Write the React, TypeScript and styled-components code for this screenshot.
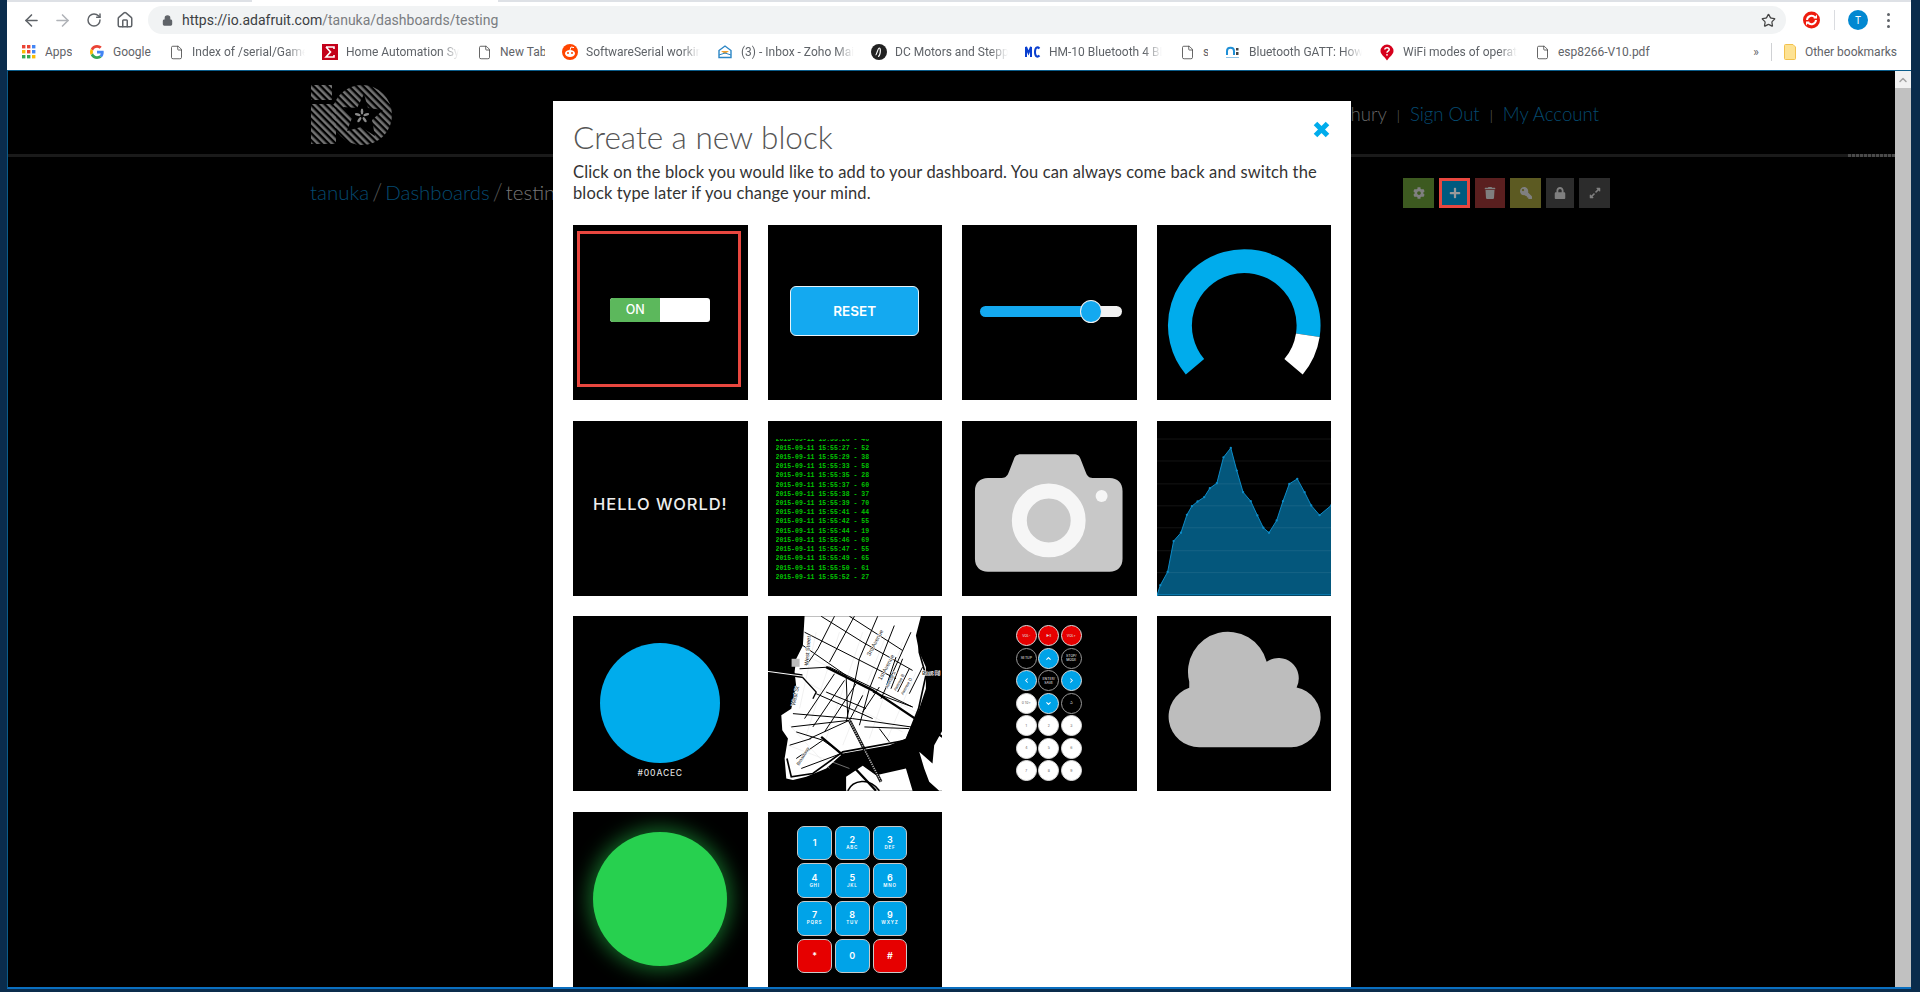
import React from "react";
import styled, { createGlobalStyle } from "styled-components";
import { ArrowLeft, ArrowRight, RotateCw, Home, Star, File, Lock, ChevronUp, ChevronDown, ChevronLeft, ChevronRight } from "lucide-react";
import { FaCog, FaPlus, FaTrash, FaKey, FaLock, FaExpandAlt } from "react-icons/fa";

const GlobalStyle = createGlobalStyle`
  html, body { margin: 0; padding: 0; background: #0a2c4c; overflow: hidden; }
  * { box-sizing: border-box; }
`;

const Window = styled.div`
  width: 1920px;
  height: 992px;
  padding: 0 9px 3px 7px;
  display: flex;
  flex-direction: column;
  background: #0a2c4c;
  overflow: hidden;
  font-family: "Lato", "Liberation Sans", sans-serif;
`;

const TabStrip = styled.div`
  height: 2px;
  background: #dee1e6;
  padding-left: 245px;
  flex: none;
`;

const ActiveTab = styled.div`
  width: 246px;
  height: 2px;
  background: #fff;
`;

const Toolbar = styled.div`
  height: 32px;
  flex: none;
  background: #fff;
  display: flex;
  align-items: flex-start;
  padding: 4px 0 0 5px;
  color: #5f6368;
`;

const NavButton = styled.span<{ $w: number; $dim?: boolean }>`
  width: ${(p) => p.$w}px;
  height: 28px;
  display: flex;
  align-items: center;
  justify-content: center;
  color: ${(p) => (p.$dim ? "#b0b3b8" : "#5f6368")};
`;

const AddressBar = styled.div`
  width: 1638px;
  height: 28px;
  margin-left: 12px;
  border-radius: 14px;
  background: #f1f3f4;
  display: flex;
  align-items: center;
  padding: 0 10px 0 14px;
  color: #5f6368;
`;

const Url = styled.span`
  margin-left: 9px;
  flex: 1;
  font-family: "Roboto", sans-serif;
  font-size: 14px;
  color: #7a7d81;
  b {
    font-weight: 400;
    color: #3c4043;
  }
`;

const ToolIcons = styled.div`
  display: flex;
  align-items: center;
  height: 28px;
  margin-left: 17px;
`;

const Divider = styled.span`
  width: 1px;
  height: 20px;
  margin: 0 13px 0 14px;
  background: #dadce0;
`;

const Avatar = styled.span`
  width: 20px;
  height: 20px;
  border-radius: 50%;
  background: #0288d1;
  color: #fff;
  font: 400 10px "Noto Sans", sans-serif;
  display: flex;
  align-items: center;
  justify-content: center;
`;

const Kebab = styled.span`
  margin-left: 19px;
  width: 3px;
  display: flex;
  flex-direction: column;
  gap: 3px;
  i {
    width: 3px;
    height: 3px;
    border-radius: 50%;
    background: #5f6368;
  }
`;

const BookmarksBar = styled.div`
  height: 36px;
  flex: none;
  background: #fff;
  display: flex;
  align-items: center;
  padding-left: 14px;
  gap: 17px;
`;

const Bookmark = styled.div`
  display: flex;
  align-items: center;
  gap: 8px;
  flex: none;
`;

const BookmarkIcon = styled.span`
  width: 16px;
  height: 16px;
  display: flex;
  align-items: center;
  justify-content: center;
  color: #5f6368;
`;

const BookmarkLabel = styled.span<{ $w: number; $fade?: boolean }>`
  width: ${(p) => p.$w}px;
  overflow: hidden;
  white-space: nowrap;
  font-family: "Roboto", sans-serif;
  font-size: 12px;
  color: #5f6368;
  ${(p) =>
    p.$fade
      ? "-webkit-mask-image: linear-gradient(90deg, #000 84%, transparent 100%); mask-image: linear-gradient(90deg, #000 84%, transparent 100%);"
      : ""}
`;

const BarEnd = styled.div`
  margin-left: auto;
  display: flex;
  align-items: center;
  padding-right: 14px;
  gap: 9px;
  font-family: "Roboto", sans-serif;
  font-size: 12px;
  color: #5f6368;
`;

const BarRule = styled.span`
  width: 1px;
  height: 18px;
  margin: 0 3px;
  background: #cfd1d4;
`;

const PageArea = styled.div`
  position: relative;
  flex: 1;
  min-height: 0;
  display: flex;
  border-top: 1px solid #0b5c8a;
  border-bottom: 2px solid #0a6fc0;
  border-left: 1px solid #0b5c8a;
`;

const Page = styled.main`
  flex: 1;
  min-width: 0;
  background: #000;
`;

const Scrollbar = styled.div`
  width: 16px;
  background: #f1f1f1;
  display: flex;
  flex-direction: column;
  color: #a3a3a3;
`;

const ScrollArrow = styled.div`
  height: 17px;
  display: flex;
  align-items: center;
  justify-content: center;
`;

const ScrollThumb = styled.div`
  flex: 1;
  background: #c1c1c1;
`;

const Header = styled.header`
  height: 86px;
  display: flex;
  justify-content: space-between;
  padding: 13px 296px 0 302px;
  border-bottom: 3px solid #1a1a1a;
  position: relative;
`;

const HeaderDots = styled.span`
  position: absolute;
  right: 0;
  bottom: -3px;
  width: 47px;
  height: 3px;
  background: repeating-linear-gradient(90deg, #4a4a4a 0 3px, #1a1a1a 3px 4px);
`;

const UserNav = styled.nav`
  display: flex;
  align-items: baseline;
  gap: 10px;
  padding-top: 19px;
  font-size: 18.6px;
  font-weight: 300;
  color: #054a70;
`;

const UserName = styled.span`
  color: #666;
`;

const NavBar = styled.span`
  font-size: 13px;
  color: #777;
`;

const SubHeader = styled.div`
  display: flex;
  justify-content: space-between;
  padding: 21px 285px 0 302px;
`;

const Crumbs = styled.div`
  display: flex;
  gap: 3px;
  align-items: baseline;
  height: 26px;
  font-size: 20.5px;
  line-height: 26px;
  font-weight: 300;
  color: #054a70;
`;

const CrumbSlash = styled.span`
  font-size: 23px;
  color: #555;
`;

const CrumbCurrent = styled.span`
  color: #777;
`;

const Actions = styled.div`
  display: flex;
  gap: 5px;
`;

const ActionButton = styled.span<{ $w: number; $bg: string; $active?: boolean }>`
  width: ${(p) => p.$w}px;
  height: 30px;
  display: flex;
  align-items: center;
  justify-content: center;
  background: ${(p) => p.$bg};
  color: ${(p) => (p.$active ? "#9a9a9a" : "#7f7f7f")};
  font-size: 12px;
  border: ${(p) => (p.$active ? "3px solid #e8473f" : "none")};
`;

const FlippedKey = styled(FaKey)`
  transform: scaleX(-1);
`;

const Modal = styled.section`
  position: absolute;
  left: 545px;
  top: 30px;
  bottom: 0;
  width: 798px;
  background: #fff;
  padding: 17px 20px 0;
  overflow: hidden;
`;

const ModalTitle = styled.h2`
  margin: 0;
  font-size: 31.5px;
  line-height: 38px;
  font-weight: 300;
  color: #555;
`;

const CloseIcon = styled.svg`
  position: absolute;
  top: 20px;
  right: 21px;
`;

const ModalText = styled.p`
  margin: 6px 0 0;
  font-size: 16.5px;
  letter-spacing: 0.13px;
  line-height: 21px;
  color: #333;
`;

const BlockGrid = styled.div`
  margin-top: 21px;
  display: grid;
  grid-template-columns: repeat(4, 1fr);
  grid-auto-rows: 175px;
  column-gap: 20px;
  row-gap: 20.67px;
`;

const Tile = styled.div`
  position: relative;
  background: #000;
  display: flex;
  align-items: center;
  justify-content: center;
  overflow: hidden;
  svg {
    display: block;
  }
`;

const SelectedOutline = styled.span`
  position: absolute;
  left: 4px;
  top: 6px;
  right: 7px;
  bottom: 13px;
  border: 3px solid #e8473f;
`;

const SwitchTrack = styled.div`
  width: 100px;
  height: 24px;
  margin: 0 0 6px 0;
  display: flex;
  border-radius: 3px;
  overflow: hidden;
  background: #fff;
`;

const SwitchOn = styled.span`
  width: 50px;
  background: #5cb85c;
  color: #fff;
  font: 500 12.5px "Inter", sans-serif;
  display: flex;
  align-items: center;
  justify-content: center;
`;

const ResetButton = styled.span`
  width: 129px;
  height: 50px;
  margin-bottom: 3px;
  border: 1px solid #e8f3f8;
  border-radius: 6px;
  background: #14a9f0;
  color: #fff;
  font: 600 13.5px "Inter", sans-serif;
  display: flex;
  align-items: center;
  justify-content: center;
`;

const SliderTrack = styled.div`
  position: relative;
  width: 142px;
  height: 11px;
  margin: 0 0 2px 3px;
  border-radius: 6px;
  background: linear-gradient(90deg, #14a9f0 0 78%, #f2f2f2 78%);
`;

const SliderKnob = styled.span`
  position: absolute;
  left: 100px;
  top: -6px;
  width: 22px;
  height: 23px;
  border-radius: 50%;
  background: #14a9f0;
  border: 1px solid #f0f0f0;
`;

const HelloText = styled.span`
  margin-bottom: 8px;
  color: #eee;
  font: 500 16.5px "Inter", sans-serif;
  letter-spacing: 0.9px;
`;

const LogTile = styled(Tile)`
  align-items: flex-start;
  justify-content: flex-start;
`;

const LogWindow = styled.div`
  margin: 18px 0 0 8px;
  height: 142px;
  overflow: hidden;
  font: 700 6.5px/9.2px "Liberation Mono", monospace;
  color: #00c400;
  white-space: pre;
`;

const LogLine = styled.div`
  &:first-child {
    margin-top: -4px;
  }
`;

const ColorTile = styled(Tile)`
  flex-direction: column;
  justify-content: flex-start;
  padding-top: 27px;
`;

const ColorDisc = styled.span`
  width: 120px;
  height: 120px;
  border-radius: 50%;
  background: #00acec;
`;

const ColorCode = styled.span`
  margin-top: 5px;
  color: #ddd;
  font: 500 8.5px "Inter", sans-serif;
  letter-spacing: 0.8px;
`;

const RemoteGrid = styled.div`
  display: grid;
  grid-template-columns: repeat(3, 21px);
  grid-auto-rows: 21px;
  gap: 1.5px;
  margin: 0 0 1px -1px;
`;

const RemoteKey = styled.span<{ $kind: "red" | "blue" | "dark" | "white" }>`
  border-radius: 50%;
  border: 0.5px solid ${(p) => (p.$kind === "dark" ? "#999" : "#ddd")};
  background: ${(p) =>
    p.$kind === "red" ? "#e60000" : p.$kind === "blue" ? "#00a3e8" : p.$kind === "white" ? "#fff" : "#000"};
  color: ${(p) => (p.$kind === "white" ? "#777" : "#ddd")};
  font: 500 3.4px/4px "Inter", sans-serif;
  display: flex;
  align-items: center;
  justify-content: center;
  text-align: center;
`;

const GlowDisc = styled.span`
  width: 134px;
  height: 134px;
  border-radius: 50%;
  background: #27d04f;
  box-shadow: 0 0 20px 4px rgba(39, 208, 79, 0.5);
`;

const KeypadGrid = styled.div`
  display: grid;
  grid-template-columns: repeat(3, 34.6px);
  grid-auto-rows: 34.6px;
  gap: 3.1px;
  margin: 0 5px 0 0;
`;

const PadKey = styled.span<{ $red?: boolean }>`
  border: 1px solid #c9c9c9;
  border-radius: 7px;
  background: ${(p) => (p.$red ? "#e60000" : "#00a3e8")};
  color: #fff;
  font: 600 9px/10px "Inter", sans-serif;
  display: flex;
  flex-direction: column;
  align-items: center;
  justify-content: center;
  small {
    font-size: 4.5px;
    line-height: 6px;
    letter-spacing: 0.8px;
  }
`;

const logLines = [
  "2015-09-11 15:55:26 - 46",
  "2015-09-11 15:55:27 - 52",
  "2015-09-11 15:55:29 - 38",
  "2015-09-11 15:55:33 - 58",
  "2015-09-11 15:55:35 - 28",
  "2015-09-11 15:55:37 - 60",
  "2015-09-11 15:55:38 - 37",
  "2015-09-11 15:55:39 - 70",
  "2015-09-11 15:55:41 - 44",
  "2015-09-11 15:55:42 - 55",
  "2015-09-11 15:55:44 - 19",
  "2015-09-11 15:55:46 - 69",
  "2015-09-11 15:55:47 - 55",
  "2015-09-11 15:55:49 - 65",
  "2015-09-11 15:55:50 - 61",
  "2015-09-11 15:55:52 - 27",
];

const chevron = { size: 7, strokeWidth: 3.5, color: "#fff" };

const remoteKeys: { label: React.ReactNode; kind: "red" | "blue" | "dark" | "white" }[] = [
  { label: "VOL-", kind: "red" },
  { label: "▶II", kind: "red" },
  { label: "VOL+", kind: "red" },
  { label: "SETUP", kind: "dark" },
  { label: <ChevronUp {...chevron} />, kind: "blue" },
  { label: "STOP/ MODE", kind: "dark" },
  { label: <ChevronLeft {...chevron} />, kind: "blue" },
  { label: "ENTER/ SAVE", kind: "dark" },
  { label: <ChevronRight {...chevron} />, kind: "blue" },
  { label: "0 10+", kind: "white" },
  { label: <ChevronDown {...chevron} />, kind: "blue" },
  { label: "↺", kind: "dark" },
  ...["1", "2", "3", "4", "5", "6", "7", "8", "9"].map((n) => ({ label: n, kind: "white" as const })),
];

const padKeys: { n: string; sub?: string; red?: boolean }[] = [
  { n: "1" },
  { n: "2", sub: "ABC" },
  { n: "3", sub: "DEF" },
  { n: "4", sub: "GHI" },
  { n: "5", sub: "JKL" },
  { n: "6", sub: "MNO" },
  { n: "7", sub: "PQRS" },
  { n: "8", sub: "TUV" },
  { n: "9", sub: "WXYZ" },
  { n: "*", red: true },
  { n: "0" },
  { n: "#", red: true },
];

const chartPoints: [number, number][] = [
  [618, 555], [628, 525], [650, 485], [668, 392], [690, 367], [708, 313], [723, 287], [740, 273], [760, 260],
  [777, 233], [798, 218], [818, 140], [840, 112], [858, 180], [877, 245], [900, 272], [920, 315], [938, 352],
  [955, 367], [978, 330], [997, 272], [1016, 220], [1040, 205], [1062, 245], [1082, 285], [1107, 314], [1143, 284],
];

const polar = (cx: number, cy: number, r: number, deg: number) => {
  const a = (deg * Math.PI) / 180;
  return `${(cx + r * Math.cos(a)).toFixed(2)} ${(cy + r * Math.sin(a)).toFixed(2)}`;
};

// angles run clockwise from 3 o'clock, so the gap sits at the bottom
const arcPath = (from: number, to: number, large: number) =>
  `M${polar(87.5, 100.5, 64.5, from)} A64.5 64.5 0 ${large} 1 ${polar(87.5, 100.5, 64.5, to)}`;

const Gauge = () => (
  <svg width="175" height="175" viewBox="0 0 175 175">
    <path d={arcPath(140, 368.7, 1)} fill="none" stroke="#00acec" strokeWidth="24" />
    <path d={arcPath(8.7, 40, 0)} fill="none" stroke="#fff" strokeWidth="24" />
  </svg>
);

const Camera = () => (
  <svg width="175" height="175" viewBox="0 0 175 175">
    <path
      d="M22 57H40C44 57 46 54 47 51L52 38C53 35 55 33 59 33H112C116 33 118 35 119 38L124 51C125 54 127 57 131 57H148C156 57 161 62 161 70V138C161 146 156 151 148 151H26C18 151 13 146 13 138V70C13 62 18 57 26 57Z"
      fill="#c8c8c8"
    />
    <circle cx="87" cy="99.5" r="29.5" fill="none" stroke="#f6f6f6" strokeWidth="15" />
    <circle cx="140" cy="75" r="6" fill="#f6f6f6" />
  </svg>
);

const AreaChart = () => {
  const line = chartPoints.map(([x, y]) => `${x},${y}`).join(" ");
  return (
    <svg width="175" height="175" viewBox="618 33 525 522">
      <polygon points={`${line} 1143,555`} fill="#04577c" />
      {[85, 151, 220, 286, 352, 421, 487].map((y) => (
        <line key={y} x1="618" x2="1143" y1={y} y2={y} stroke="#fff" strokeOpacity="0.12" strokeWidth="2" />
      ))}
      <polyline points={line} fill="none" stroke="#0d8cc8" strokeWidth="3" />
      <line x1="618" x2="1143" y1="554" y2="554" stroke="#0d8cc8" strokeWidth="3" />
      {chartPoints.map(([x, y]) => (
        <circle key={x} cx={x} cy={y} r="3.5" fill="#0d8cc8" />
      ))}
    </svg>
  );
};

const mapRoads = [
  "M175 12L300 90L450 175",
  "M260 12L420 115",
  "M125 60L400 200",
  "M110 170L200 165L450 285",
  "M90 305L270 320L445 345",
  "M85 345L260 325",
  "M120 100L250 190L255 320",
  "M215 12L165 110L130 160",
  "M275 12L200 150",
  "M345 12L290 140L270 240L250 330",
  "M395 40L320 230L290 340",
  "M445 60L355 260",
  "M140 380L260 325L300 250",
  "M160 245L330 320",
  "M190 240L310 290",
  "M100 360L180 385L230 420",
  "M350 350L380 390",
  "M80 400L145 380",
  "M420 140L385 230",
  "M400 135L370 225",
  "M440 170L405 240",
  "M480 165L440 245",
  "M125 320L215 185",
  "M150 345L245 205",
  "M185 360L280 215",
  "M300 300L350 225",
  "M100 440L180 385",
  "M115 470L235 425",
  "M305 345L440 350",
  "M330 240L450 285",
];

const mapLanes = [
  "M130 130L460 300",
  "M130 210L420 360",
  "M75 400L260 470",
  "M80 340L200 470",
  "M160 60L110 290",
  "M230 60L130 370",
  "M300 60L190 380",
  "M370 70L240 400",
  "M420 90L320 380",
  "M460 180L370 390",
];

const CityMap = () => (
  <svg width="175" height="175" viewBox="15 12 525 525">
    <rect x="15" y="12" width="525" height="525" fill="#000" />
    <path
      d="M125 12H475L460 70L470 120L490 165L490 230L470 290L445 345L430 380L380 400L240 425L190 470L130 495L90 505L70 500L65 440L75 380L58 355L55 310L85 290L100 225L95 180L100 140L120 100Z"
      fill="#fff"
    />
    <path d="M540 355L515 400L510 455L470 420L485 470L500 510L530 537H540Z" fill="#fff" />
    <path d="M250 495L300 462L340 490L430 470L450 537H250Z" fill="#fff" />
    <g fill="none" stroke="#e2e2e2" strokeWidth="1.5">
      {mapLanes.map((d) => (
        <path key={d} d={d} />
      ))}
    </g>
    <g fill="none" stroke="#000" strokeWidth="3">
      {mapRoads.map((d) => (
        <path key={d} d={d} />
      ))}
    </g>
    <g fill="none" stroke="#000">
      <path d="M15 178L118 192" strokeWidth="11" />
      <path d="M15 178L118 192" strokeWidth="3" stroke="#fff" />
      <path d="M190 165L330 235L540 375" strokeWidth="7" />
      <path d="M175 375L235 425L340 537" strokeWidth="7" />
      <path d="M260 325L355 510" strokeWidth="9" />
      <path d="M260 325L355 510" strokeWidth="5" stroke="#aaa" strokeDasharray="4 3" />
      <path d="M118 195L160 240L150 260" strokeWidth="4" />
      <path d="M72 440L85 495L150 485L240 420L430 385L468 290L490 190L470 120L470 50" strokeWidth="5" />
      <path d="M60 500L75 537" strokeWidth="5" />
      <path d="M255 537C270 505 320 495 350 537" strokeWidth="5" />
    </g>
    <g fontFamily="Liberation Sans, sans-serif" fontSize="17" fill="#222" stroke="#fff" strokeWidth="3" paintOrder="stroke">
      <text transform="translate(136 160) rotate(-85)">West Street</text>
      <text transform="translate(96 282) rotate(-78)">West St</text>
      <text transform="translate(322 132) rotate(-62)">3rd Avenue</text>
      <text transform="translate(356 205) rotate(-62)">1st Avenue</text>
      <text transform="translate(375 230) rotate(-62)" fontSize="13">Avenue A</text>
      <text transform="translate(400 238) rotate(-62)" fontSize="13">Avenue B</text>
      <text transform="translate(422 250) rotate(-62)" fontSize="13">Avenue D</text>
      <text transform="translate(108 462) rotate(-58)" fontSize="14">Broadway</text>
      <text x="478" y="188">East Ri</text>
    </g>
    <rect x="86" y="140" width="24" height="24" fill="#bbb" />
  </svg>
);

const Cloud = () => (
  <svg width="175" height="175" viewBox="618 18 525 525">
    <path
      d="M745 412H1022A91 91 0 0 0 1038 232A61 61 0 0 0 948 155A120 120 0 0 0 715 215V233A92 92 0 0 0 745 412Z"
      fill="#bdbdbd"
    />
  </svg>
);

const LogoMark = () => (
  <svg width="82" height="62" viewBox="8 4 82 62">
    <defs>
      <pattern id="hatch" width="5" height="5" patternUnits="userSpaceOnUse" patternTransform="rotate(-45)">
        <rect width="2.6" height="5" fill="#737373" />
      </pattern>
    </defs>
    <rect x="9" y="5" width="21" height="15" fill="url(#hatch)" />
    <path d="M9 24H34V64H9Z" fill="url(#hatch)" />
    <circle cx="60" cy="35" r="30" fill="url(#hatch)" />
    <path d="M62 14L66 28L81 30L70 40L73 56L59 47L45 51L50 38L41 27L55 28Z" fill="#000" />
    <g fill="#8a8a8a">
      {[0, 72, 144, 216, 288].map((a) => (
        <ellipse key={a} cx="60" cy="31.500" rx="1.300" ry="3" transform={`rotate(${a} 60 36)`} />
      ))}
    </g>
  </svg>
);

const GoogleIcon = () => (
  <svg width="14" height="14" viewBox="0 0 48 48">
    <path fill="#ea4335" d="M24 9.5c3.5 0 6.7 1.2 9.2 3.6l6.9-6.9C35.9 2.4 30.5 0 24 0 14.6 0 6.5 5.4 2.6 13.3l8 6.2C12.4 13.6 17.700 9.5 24 9.5z" />
    <path fill="#4285f4" d="M47 24.500c0-1.600-.1-3.100-.4-4.500H24v9h12.900c-.6 3-2.200 5.500-4.700 7.200l7.700 6c4.500-4.200 7.100-10.300 7.100-17.700z" />
    <path fill="#fbbc05" d="M10.600 28.500c-.5-1.400-.8-2.900-.8-4.500s.3-3.100.8-4.500l-8-6.200C.9 16.500 0 20.100 0 24s.9 7.500 2.600 10.700l8-6.200z" />
    <path fill="#34a853" d="M24 48c6.500 0 11.900-2.100 15.900-5.800l-7.700-6c-2.200 1.400-4.900 2.300-8.200 2.300-6.300 0-11.600-4.100-13.400-9.900l-8 6.200C6.500 42.600 14.600 48 24 48z" />
  </svg>
);

const AppsIcon = () => (
  <svg width="14" height="14" viewBox="0 0 14 14">
    {[0, 5, 10].flatMap((y, r) =>
      [0, 5, 10].map((x, c) => (
        <rect
          key={`${x}-${y}`}
          x={x}
          y={y}
          width="3.4"
          height="3.4"
          fill={[["#ea4335", "#ea4335", "#4285f4"], ["#fbbc05", "#ea4335", "#4285f4"], ["#34a853", "#34a853", "#fbbc05"]][r][c]}
        />
      ))
    )}
  </svg>
);

const SigmaIcon = () => (
  <svg width="16" height="16" viewBox="0 0 16 16">
    <rect width="16" height="16" fill="#c4001a" />
    <path d="M4 3H12V5M4 3L8.500 8L4 13H12V11" fill="none" stroke="#fff" strokeWidth="1.600" />
  </svg>
);

const RedditIcon = () => (
  <svg width="16" height="16" viewBox="0 0 16 16">
    <circle cx="8" cy="8" r="8" fill="#ff4500" />
    <ellipse cx="8" cy="9.500" rx="5" ry="3.400" fill="#fff" />
    <circle cx="6" cy="9" r="1" fill="#ff4500" />
    <circle cx="10" cy="9" r="1" fill="#ff4500" />
    <path d="M8 6L9 3L12 3.600" stroke="#fff" fill="none" />
  </svg>
);

const ZohoIcon = () => (
  <svg width="16" height="16" viewBox="0 0 16 16">
    <path d="M2 6.500L8 2L14 6.500V13.500H2Z" fill="#fff" stroke="#2c86c5" strokeWidth="1.400" />
    <path d="M4 7H12L8 10Z" fill="#f0a030" />
    <path d="M2 11L8 9L14 11" fill="none" stroke="#2c86c5" />
  </svg>
);

const ScopeIcon = () => (
  <svg width="16" height="16" viewBox="0 0 16 16">
    <circle cx="8" cy="8" r="8" fill="#222" />
    <path d="M4.500 11C6 11 6.500 4 8.500 4C10 4 9.500 12 7 12.500" fill="none" stroke="#fff" strokeWidth="1.200" />
  </svg>
);

const McIcon = () => (
  <svg width="16" height="16" viewBox="0 0 16 16">
    <path d="M1 13V3L3.500 9L6 3V13M14.500 4.500C12.500 2.500 10 3 10 8S12.500 13.500 14.500 11.500" fill="none" stroke="#0a3fcf" strokeWidth="2" />
  </svg>
);

const SilverBitsIcon = () => (
  <svg width="16" height="16" viewBox="0 0 16 16">
    <path d="M2 11V7C2 2.500 9 2.500 9 7V11" fill="none" stroke="#1f8fd6" strokeWidth="2" />
    <rect x="11" y="4" width="2.500" height="2.500" fill="#444" />
    <rect x="11" y="8" width="2.500" height="3" fill="#444" />
    <rect x="1" y="13" width="13" height="1" fill="#8fc4e8" />
  </svg>
);

const WifiIcon = () => (
  <svg width="14" height="17" viewBox="0 0 14 17">
    <path d="M7 0.500A6.500 6.500 0 0 1 13.500 7C13.500 10.500 10 12 7 16.500C4 12 0.500 10.500 0.500 7A6.500 6.500 0 0 1 7 0.500Z" fill="#d6001c" />
    <path d="M4.800 5.500C5 3 9.200 3 9.200 5.500C9.200 7.300 7 7 7 8.800" fill="none" stroke="#fff" strokeWidth="1.500" />
    <circle cx="7" cy="10.800" r="0.900" fill="#fff" />
  </svg>
);

const SyncBadge = () => (
  <svg width="17" height="18" viewBox="0 0 17 18">
    <circle cx="8.500" cy="9" r="8.500" fill="#ee1c0e" />
    <path d="M4 9A4.500 4.500 0 0 1 12 6.500M13 9A4.500 4.500 0 0 1 5 11.500" fill="none" stroke="#fff" strokeWidth="2" />
    <path d="M10.500 7.500H14V3.500ZM6.500 10.500H3V14.500Z" fill="#fff" />
  </svg>
);

const FolderIcon = () => (
  <svg width="12" height="16" viewBox="0 0 12 16">
    <path d="M0.500 1.500A1 1 0 0 1 1.500 0.500H9L11.500 3V14.500A1 1 0 0 1 10.500 15.500H1.500A1 1 0 0 1 0.500 14.500Z" fill="#fde293" stroke="#f2c14e" />
  </svg>
);

const DocIcon = () => <File size={15} strokeWidth={1.3} color="#444" />;

const bookmarks: { icon: React.ReactNode; label: string; w: number; fade?: boolean }[] = [
  { icon: <AppsIcon />, label: "Apps", w: 27 },
  { icon: <GoogleIcon />, label: "Google", w: 38 },
  { icon: <DocIcon />, label: "Index of /serial/Game", w: 113, fade: true },
  { icon: <SigmaIcon />, label: "Home Automation Sys", w: 113, fade: true },
  { icon: <DocIcon />, label: "New Tab", w: 45 },
  { icon: <RedditIcon />, label: "SoftwareSerial working", w: 114, fade: true },
  { icon: <ZohoIcon />, label: "(3) - Inbox - Zoho Mail", w: 113, fade: true },
  { icon: <ScopeIcon />, label: "DC Motors and Steppers", w: 113, fade: true },
  { icon: <McIcon />, label: "HM-10 Bluetooth 4 BLE", w: 113, fade: true },
  { icon: <DocIcon />, label: "s", w: 5 },
  { icon: <SilverBitsIcon />, label: "Bluetooth GATT: How", w: 113, fade: true },
  { icon: <WifiIcon />, label: "WiFi modes of operation", w: 114, fade: true },
  { icon: <DocIcon />, label: "esp8266-V10.pdf", w: 92 },
];

export default function App() {
  return (
    <Window>
      <GlobalStyle />
      <TabStrip>
        <ActiveTab />
      </TabStrip>
      <Toolbar>
        <NavButton $w={38}>
          <ArrowLeft size={19} />
        </NavButton>
        <NavButton $w={24} $dim>
          <ArrowRight size={19} />
        </NavButton>
        <NavButton $w={40}>
          <RotateCw size={16} strokeWidth={2.2} />
        </NavButton>
        <NavButton $w={22}>
          <Home size={18} />
        </NavButton>
        <AddressBar>
          <Lock size={11} fill="#5f6368" strokeWidth={2.5} />
          <Url>
            <b>https://io.adafruit.com</b>/tanuka/dashboards/testing
          </Url>
          <Star size={15} color="#444" strokeWidth={2} />
        </AddressBar>
        <ToolIcons>
          <SyncBadge />
          <Divider />
          <Avatar>T</Avatar>
          <Kebab>
            <i />
            <i />
            <i />
          </Kebab>
        </ToolIcons>
      </Toolbar>
      <BookmarksBar>
        {bookmarks.map((b) => (
          <Bookmark key={b.label}>
            <BookmarkIcon>{b.icon}</BookmarkIcon>
            <BookmarkLabel $w={b.w} $fade={b.fade}>
              {b.label}
            </BookmarkLabel>
          </Bookmark>
        ))}
        <BarEnd>
          <span>»</span>
          <BarRule />
          <FolderIcon />
          <span>Other bookmarks</span>
        </BarEnd>
      </BookmarksBar>
      <PageArea>
        <Page>
          <Header>
            <LogoMark />
            <UserNav>
              <UserName>Tanuka Chowdhury</UserName>
              <NavBar>|</NavBar>
              <span>Sign Out</span>
              <NavBar>|</NavBar>
              <span>My Account</span>
            </UserNav>
            <HeaderDots />
          </Header>
          <SubHeader>
            <Crumbs>
              <span>tanuka</span>
              <CrumbSlash>/</CrumbSlash>
              <span>Dashboards</span>
              <CrumbSlash>/</CrumbSlash>
              <CrumbCurrent>testing</CrumbCurrent>
            </Crumbs>
            <Actions>
              <ActionButton $w={31} $bg="#3d5a20">
                <FaCog />
              </ActionButton>
              <ActionButton $w={31} $bg="#005a7f" $active>
                <FaPlus />
              </ActionButton>
              <ActionButton $w={30} $bg="#5a1f1f">
                <FaTrash />
              </ActionButton>
              <ActionButton $w={31} $bg="#5c5a22">
                <FlippedKey />
              </ActionButton>
              <ActionButton $w={28} $bg="#2c2c2c">
                <FaLock />
              </ActionButton>
              <ActionButton $w={31} $bg="#2c2c2c">
                <FaExpandAlt />
              </ActionButton>
            </Actions>
          </SubHeader>
        </Page>
        <Scrollbar>
          <ScrollArrow>
            <ChevronUp size={12} strokeWidth={3} />
          </ScrollArrow>
          <ScrollThumb />
        </Scrollbar>
        <Modal>
          <ModalTitle>Create a new block</ModalTitle>
          <CloseIcon width="17" height="17" viewBox="0 0 17 17">
            <path d="M2.500 2.500L14.500 14.500M14.500 2.500L2.500 14.500" stroke="#00acec" strokeWidth="5" />
          </CloseIcon>
          <ModalText>
            Click on the block you would like to add to your dashboard. You can always come back and switch the
            <br />
            block type later if you change your mind.
          </ModalText>
          <BlockGrid>
            <Tile>
              <SelectedOutline />
              <SwitchTrack>
                <SwitchOn>ON</SwitchOn>
              </SwitchTrack>
            </Tile>
            <Tile>
              <ResetButton>RESET</ResetButton>
            </Tile>
            <Tile>
              <SliderTrack>
                <SliderKnob />
              </SliderTrack>
            </Tile>
            <Tile>
              <Gauge />
            </Tile>
            <Tile>
              <HelloText>HELLO WORLD!</HelloText>
            </Tile>
            <LogTile>
              <LogWindow>
                {logLines.map((l) => (
                  <LogLine key={l}>{l}</LogLine>
                ))}
              </LogWindow>
            </LogTile>
            <Tile>
              <Camera />
            </Tile>
            <Tile>
              <AreaChart />
            </Tile>
            <ColorTile>
              <ColorDisc />
              <ColorCode>#00ACEC</ColorCode>
            </ColorTile>
            <Tile>
              <CityMap />
            </Tile>
            <Tile>
              <RemoteGrid>
                {remoteKeys.map((k, i) => (
                  <RemoteKey key={i} $kind={k.kind}>
                    {k.label}
                  </RemoteKey>
                ))}
              </RemoteGrid>
            </Tile>
            <Tile>
              <Cloud />
            </Tile>
            <Tile>
              <GlowDisc />
            </Tile>
            <Tile>
              <KeypadGrid>
                {padKeys.map((k) => (
                  <PadKey key={k.n} $red={k.red}>
                    {k.n}
                    {k.sub && <small>{k.sub}</small>}
                  </PadKey>
                ))}
              </KeypadGrid>
            </Tile>
          </BlockGrid>
        </Modal>
      </PageArea>
    </Window>
  );
}
